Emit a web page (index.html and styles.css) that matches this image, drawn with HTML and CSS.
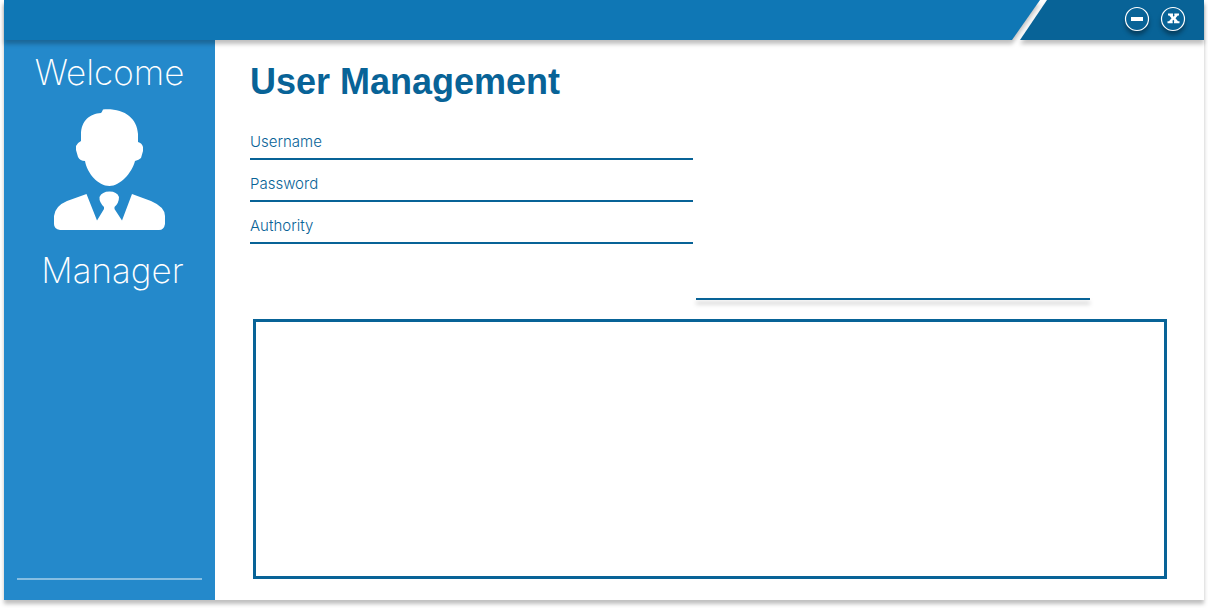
FILE: index.html
```html
<!DOCTYPE html>
<html lang="en">
<head>
  <meta charset="utf-8">
  <title>User Management</title>
  <link rel="stylesheet" href="styles.css">
</head>
<body>
  <div class="window">
    <header class="titlebar">
      <div class="titlebar-main"></div>
      <div class="titlebar-controls">
        <button class="control" type="button" aria-label="Minimize">
          <svg width="26" height="26" viewBox="0 0 26 26" aria-hidden="true">
            <circle cx="13" cy="13" r="11.5" class="control-ring"/>
            <path d="M7 11h12v4H7z" fill="#fff"/>
          </svg>
        </button>
        <button class="control" type="button" aria-label="Close">
          <svg width="26" height="26" viewBox="0 0 26 26" aria-hidden="true">
            <circle cx="13" cy="13" r="11.5" class="control-ring"/>
            <path d="M8 7.500h5v2h-.3l1 1.300 1-1.300h-.4v-2H19v2h-1.200l-2.300 2.800 2.500 3H19.500v2H14v-2h.5l-1.200-1.500-1.100 1.500h.5v2H7.500v-2H9l2.500-3-2.300-2.800H8z" fill="#fff"/>
          </svg>
        </button>
      </div>
    </header>
    <div class="body">
      <aside class="sidebar">
        <p class="greeting">Welcome</p>
        <svg class="avatar" width="111" height="122" viewBox="0 0 111 122" fill="#fff" aria-hidden="true">
          <path d="M47 4Q48 3 49 .5C70 -1 83 9 84 25V33Q88 34 89 38V42L87 49Q85 51 81 52C78 64 66 77 55.500 77C44 77 33 64 31 52Q26 52 24 48L22 41V37Q23 34 27 32V26C27 11 36 5 47 4Z"/>
          <path d="M32.500 85L43 111.500L50 100V98Q45 93 45.500 88Q48 82.500 55.500 82.500Q63 82.500 65 88Q65 94 60.500 98V100L68 111.500L78 85L97 92Q111 98 111 107V115Q110 121 105 121H6Q0 120 0 115V107Q1 97 13 92Z"/>
        </svg>
        <p class="role">Manager</p>
        <hr class="sidebar-rule">
      </aside>
      <main class="content">
        <h1 class="title">User Management</h1>
        <form class="form">
          <div class="fields">
            <div class="field">
              <label class="label" for="username">Username</label>
              <input class="input" id="username" type="text">
            </div>
            <div class="field">
              <label class="label" for="password">Password</label>
              <input class="input" id="password" type="password">
            </div>
            <div class="field">
              <label class="label" for="authority">Authority</label>
              <input class="input" id="authority" type="text">
            </div>
          </div>
          <input class="search" type="search" aria-label="Search users">
        </form>
        <section class="list" aria-label="Users"></section>
      </main>
    </div>
  </div>
</body>
</html>
```
FILE: styles.css
```css
* {
  box-sizing: border-box;
}

body {
  margin: 0;
  padding: 0 4px 8px;
  min-height: 100vh;
  display: flex;
  background: #fff;
  color: #086397;
  font-family: "Inter", "Liberation Sans", sans-serif;
}

.window {
  flex: 1;
  display: flex;
  flex-direction: column;
  background: #fff;
  box-shadow: 0 4px 4px rgba(0, 0, 0, 0.25);
}

.titlebar {
  position: relative;
  z-index: 1;
  display: flex;
  height: 40px;
  filter: drop-shadow(0 4px 2px rgba(0, 0, 0, 0.25));
}

.titlebar-main {
  flex: 1;
  margin-right: -20px;
  background: #0f77b5;
  clip-path: polygon(0 0, 100% 0, calc(100% - 28px) 100%, 0 100%);
}

.titlebar-controls {
  display: flex;
  justify-content: flex-end;
  align-items: center;
  gap: 10px;
  width: 184px;
  padding: 0 18px 2px 0;
  background: #086397;
  clip-path: polygon(27px 0, 100% 0, 100% 100%, 0 100%);
}

.control {
  display: flex;
  padding: 0;
  border: 0;
  background: none;
  cursor: pointer;
}

.control svg {
  overflow: visible;
  filter: drop-shadow(0 4px 2px rgba(0, 0, 0, 0.35));
}

.control-ring {
  fill: #086397;
  stroke: #fff;
  stroke-width: 1.2;
}

.body {
  flex: 1;
  display: flex;
}

.sidebar {
  width: 211px;
  display: flex;
  flex-direction: column;
  align-items: center;
  padding: 12px 13px 20px;
  background: #2489cb;
  color: #fff;
}

.greeting,
.role {
  margin: 0;
  font-size: 35px;
  font-weight: 200;
  line-height: 40px;
}

.role {
  padding-left: 6px;
}

.avatar {
  margin: 17px 0 19px;
}

.sidebar-rule {
  align-self: stretch;
  height: 2px;
  margin: auto 0 0;
  border: 0;
  background: rgba(255, 255, 255, 0.45);
}

.content {
  flex: 1;
  display: flex;
  flex-direction: column;
  padding: 20px 37px 21px 35px;
}

.title {
  margin: 0;
  font-family: "Liberation Sans", sans-serif;
  font-size: 36px;
  font-weight: 700;
  line-height: 44px;
}

.form {
  display: grid;
  grid-template-columns: 443fr 394fr 74fr;
  column-gap: 3px;
  margin-top: 14px;
}

.field {
  display: flex;
  align-items: flex-end;
  height: 42px;
  border-bottom: 2px solid #086397;
}

.label {
  padding-bottom: 6px;
  font-size: 15px;
  font-weight: 300;
  line-height: 20px;
}

.input,
.search {
  min-width: 0;
  padding: 0 8px;
  border: 0;
  background: none;
  color: inherit;
  font: inherit;
  outline: none;
}

.input {
  flex: 1;
  height: 32px;
}

.search {
  grid-row: 2;
  grid-column: 2;
  height: 32px;
  margin-top: 24px;
  border-bottom: 2px solid #086397;
  border-radius: 0;
  appearance: none;
  filter: drop-shadow(0 4px 2px rgba(0, 0, 0, 0.25));
}

.list {
  flex: 1;
  margin: 19px 0 0 3px;
  border: 3px solid #086397;
}
```
